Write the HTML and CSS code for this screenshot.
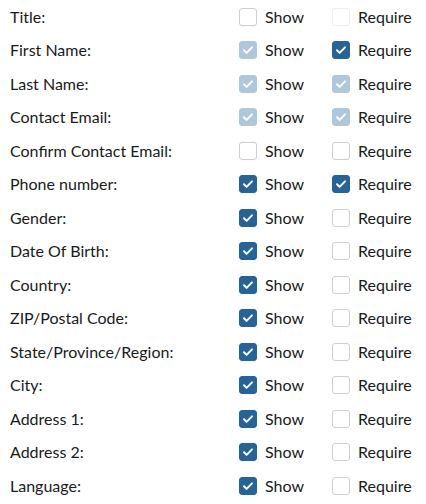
FILE: index.html
```html
<!DOCTYPE html>
<html>
<head>
<meta charset="utf-8">
<link rel="stylesheet" href="styles.css">
</head>
<body>
<div class="form">
  <div class="row"><span class="label">Title:</span>
    <label class="opt"><span class="box"></span>Show</label>
    <label class="opt"><span class="box faint"></span>Require</label></div>
  <div class="row"><span class="label">First Name:</span>
    <label class="opt"><span class="box dis"><svg viewBox="0 0 18 18"><path d="M5 9.3l2.6 2.6L13 6.4"/></svg></span>Show</label>
    <label class="opt"><span class="box on"><svg viewBox="0 0 18 18"><path d="M5 9.3l2.6 2.6L13 6.4"/></svg></span>Require</label></div>
  <div class="row"><span class="label">Last Name:</span>
    <label class="opt"><span class="box dis"><svg viewBox="0 0 18 18"><path d="M5 9.3l2.6 2.6L13 6.4"/></svg></span>Show</label>
    <label class="opt"><span class="box dis"><svg viewBox="0 0 18 18"><path d="M5 9.3l2.6 2.6L13 6.4"/></svg></span>Require</label></div>
  <div class="row"><span class="label">Contact Email:</span>
    <label class="opt"><span class="box dis"><svg viewBox="0 0 18 18"><path d="M5 9.3l2.6 2.6L13 6.4"/></svg></span>Show</label>
    <label class="opt"><span class="box dis"><svg viewBox="0 0 18 18"><path d="M5 9.3l2.6 2.6L13 6.4"/></svg></span>Require</label></div>
  <div class="row"><span class="label">Confirm Contact Email:</span>
    <label class="opt"><span class="box"></span>Show</label>
    <label class="opt"><span class="box"></span>Require</label></div>
  <div class="row"><span class="label">Phone number:</span>
    <label class="opt"><span class="box on"><svg viewBox="0 0 18 18"><path d="M5 9.3l2.6 2.6L13 6.4"/></svg></span>Show</label>
    <label class="opt"><span class="box on"><svg viewBox="0 0 18 18"><path d="M5 9.3l2.6 2.6L13 6.4"/></svg></span>Require</label></div>
  <div class="row"><span class="label">Gender:</span>
    <label class="opt"><span class="box on"><svg viewBox="0 0 18 18"><path d="M5 9.3l2.6 2.6L13 6.4"/></svg></span>Show</label>
    <label class="opt"><span class="box"></span>Require</label></div>
  <div class="row"><span class="label">Date Of Birth:</span>
    <label class="opt"><span class="box on"><svg viewBox="0 0 18 18"><path d="M5 9.3l2.6 2.6L13 6.4"/></svg></span>Show</label>
    <label class="opt"><span class="box"></span>Require</label></div>
  <div class="row"><span class="label">Country:</span>
    <label class="opt"><span class="box on"><svg viewBox="0 0 18 18"><path d="M5 9.3l2.6 2.6L13 6.4"/></svg></span>Show</label>
    <label class="opt"><span class="box"></span>Require</label></div>
  <div class="row"><span class="label">ZIP/Postal Code:</span>
    <label class="opt"><span class="box on"><svg viewBox="0 0 18 18"><path d="M5 9.3l2.6 2.6L13 6.4"/></svg></span>Show</label>
    <label class="opt"><span class="box"></span>Require</label></div>
  <div class="row"><span class="label">State/Province/Region:</span>
    <label class="opt"><span class="box on"><svg viewBox="0 0 18 18"><path d="M5 9.3l2.6 2.6L13 6.4"/></svg></span>Show</label>
    <label class="opt"><span class="box"></span>Require</label></div>
  <div class="row"><span class="label">City:</span>
    <label class="opt"><span class="box on"><svg viewBox="0 0 18 18"><path d="M5 9.3l2.6 2.6L13 6.4"/></svg></span>Show</label>
    <label class="opt"><span class="box"></span>Require</label></div>
  <div class="row"><span class="label">Address 1:</span>
    <label class="opt"><span class="box on"><svg viewBox="0 0 18 18"><path d="M5 9.3l2.6 2.6L13 6.4"/></svg></span>Show</label>
    <label class="opt"><span class="box"></span>Require</label></div>
  <div class="row"><span class="label">Address 2:</span>
    <label class="opt"><span class="box on"><svg viewBox="0 0 18 18"><path d="M5 9.3l2.6 2.6L13 6.4"/></svg></span>Show</label>
    <label class="opt"><span class="box"></span>Require</label></div>
  <div class="row"><span class="label">Language:</span>
    <label class="opt"><span class="box on"><svg viewBox="0 0 18 18"><path d="M5 9.3l2.6 2.6L13 6.4"/></svg></span>Show</label>
    <label class="opt"><span class="box"></span>Require</label></div>
</div>
</body>
</html>
```
FILE: styles.css
```css
html, body {
  margin: 0;
  padding: 0;
  background: #fff;
}
body {
  font-family: Lato, "Open Sans", sans-serif;
  font-size: 16px;
  color: #1a1a1a;
}
.form {
  display: flex;
  flex-direction: column;
  padding-left: 10px;
}
.row {
  height: 33.5px;
  display: grid;
  grid-template-columns: 229px 93px auto;
  align-items: center;
}
.label {
  line-height: 18px;
}
.opt {
  display: flex;
  align-items: center;
  gap: 8px;
  line-height: 18px;
}
.box {
  width: 18px;
  height: 18px;
  box-sizing: border-box;
  border: 1px solid #cfcfcf;
  border-radius: 3px;
  background: #fff;
  display: flex;
  align-items: center;
  justify-content: center;
}
.box.faint {
  border-color: #ececec;
}
.box.on {
  background: #24649a;
  border-color: #24649a;
}
.box.dis {
  background: #adc8dc;
  border-color: #adc8dc;
}
.box svg {
  width: 18px;
  height: 18px;
  flex: none;
}
.box path {
  fill: none;
  stroke: #fff;
  stroke-width: 2;
  stroke-linecap: round;
  stroke-linejoin: round;
}
```
